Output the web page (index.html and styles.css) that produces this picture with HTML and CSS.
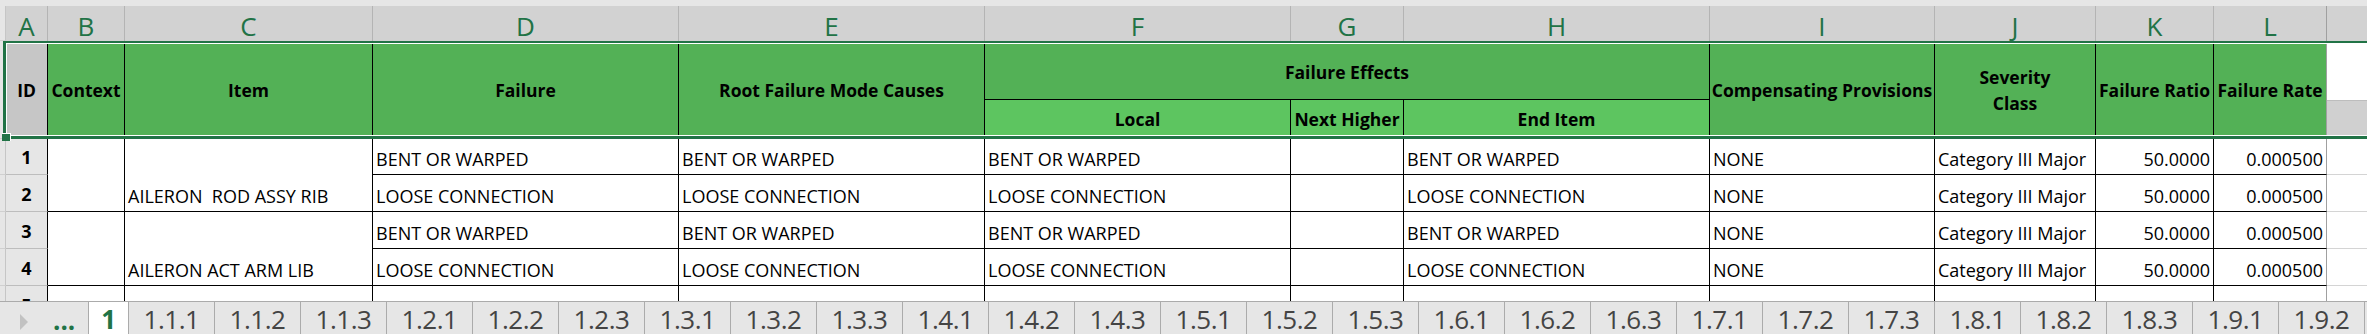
FILE: index.html
```html
<!DOCTYPE html>
<html lang="en">
<head>
<meta charset="utf-8">
<title>FMEA worksheet</title>
<link rel="stylesheet" href="styles.css">
</head>
<body>
<div class="app">
  <div class="topstrip"></div>
  <div class="sheet">
    <div class="grid">
      <!-- column letters -->
      <div class="gut col-gut"></div>
      <div class="colh">A</div>
      <div class="colh">B</div>
      <div class="colh">C</div>
      <div class="colh">D</div>
      <div class="colh">E</div>
      <div class="colh">F</div>
      <div class="colh">G</div>
      <div class="colh">H</div>
      <div class="colh">I</div>
      <div class="colh">J</div>
      <div class="colh">K</div>
      <div class="colh last">L</div>
      <div class="colh rest"></div>

      <!-- header rows -->
      <div class="gut span2"></div>
      <div class="idcell span2">ID</div>
      <div class="hd span2">Context</div>
      <div class="hd span2">Item</div>
      <div class="hd span2">Failure</div>
      <div class="hd span2">Root Failure Mode Causes</div>
      <div class="hd group">Failure Effects</div>
      <div class="hd span2">Compensating Provisions</div>
      <div class="hd span2">Severity<br>Class</div>
      <div class="hd span2">Failure Ratio</div>
      <div class="hd span2 last">Failure Rate</div>
      <div class="rest-top"></div>
      <div class="hd sub">Local</div>
      <div class="hd sub">Next Higher</div>
      <div class="hd sub">End Item</div>
      <div class="rest-bot"></div>

      <!-- row 1 -->
      <div class="gut"></div>
      <div class="rn">1</div>
      <div class="c span2"></div>
      <div class="c span2 pre">AILERON  ROD ASSY RIB</div>
      <div class="c">BENT OR WARPED</div>
      <div class="c">BENT OR WARPED</div>
      <div class="c">BENT OR WARPED</div>
      <div class="c"></div>
      <div class="c">BENT OR WARPED</div>
      <div class="c">NONE</div>
      <div class="c">Category III Major</div>
      <div class="c num">50.0000</div>
      <div class="c num last">0.000500</div>
      <div class="r"></div>
      <!-- row 2 -->
      <div class="gut"></div>
      <div class="rn">2</div>
      <div class="c">LOOSE CONNECTION</div>
      <div class="c">LOOSE CONNECTION</div>
      <div class="c">LOOSE CONNECTION</div>
      <div class="c"></div>
      <div class="c">LOOSE CONNECTION</div>
      <div class="c">NONE</div>
      <div class="c">Category III Major</div>
      <div class="c num">50.0000</div>
      <div class="c num last">0.000500</div>
      <div class="r"></div>
      <!-- row 3 -->
      <div class="gut"></div>
      <div class="rn">3</div>
      <div class="c span2"></div>
      <div class="c span2">AILERON ACT ARM LIB</div>
      <div class="c">BENT OR WARPED</div>
      <div class="c">BENT OR WARPED</div>
      <div class="c">BENT OR WARPED</div>
      <div class="c"></div>
      <div class="c">BENT OR WARPED</div>
      <div class="c">NONE</div>
      <div class="c">Category III Major</div>
      <div class="c num">50.0000</div>
      <div class="c num last">0.000500</div>
      <div class="r"></div>
      <!-- row 4 -->
      <div class="gut"></div>
      <div class="rn">4</div>
      <div class="c">LOOSE CONNECTION</div>
      <div class="c">LOOSE CONNECTION</div>
      <div class="c">LOOSE CONNECTION</div>
      <div class="c"></div>
      <div class="c">LOOSE CONNECTION</div>
      <div class="c">NONE</div>
      <div class="c">Category III Major</div>
      <div class="c num">50.0000</div>
      <div class="c num last">0.000500</div>
      <div class="r"></div>
      <!-- row 5 -->
      <div class="gut"></div>
      <div class="rn">5</div>
      <div class="c"></div>
      <div class="c"></div>
      <div class="c"></div>
      <div class="c"></div>
      <div class="c"></div>
      <div class="c"></div>
      <div class="c"></div>
      <div class="c"></div>
      <div class="c"></div>
      <div class="c"></div>
      <div class="c last"></div>
      <div class="r"></div>
    </div>
    <div class="selection"><span class="handle"></span></div>
  </div>

  <div class="tabbar">
    <div class="tabnav">
      <svg class="navarrow" width="10" height="18" viewBox="0 0 10 18"><polygon points="1,1 9,9 1,17" fill="#c2c2c2"/></svg>
      <span class="dots">...</span>
    </div>
    <div class="tab active">1</div>
    <div class="tab">1.1.1</div>
    <div class="tab">1.1.2</div>
    <div class="tab">1.1.3</div>
    <div class="tab">1.2.1</div>
    <div class="tab">1.2.2</div>
    <div class="tab">1.2.3</div>
    <div class="tab">1.3.1</div>
    <div class="tab">1.3.2</div>
    <div class="tab">1.3.3</div>
    <div class="tab">1.4.1</div>
    <div class="tab">1.4.2</div>
    <div class="tab">1.4.3</div>
    <div class="tab">1.5.1</div>
    <div class="tab">1.5.2</div>
    <div class="tab">1.5.3</div>
    <div class="tab">1.6.1</div>
    <div class="tab">1.6.2</div>
    <div class="tab">1.6.3</div>
    <div class="tab">1.7.1</div>
    <div class="tab">1.7.2</div>
    <div class="tab">1.7.3</div>
    <div class="tab">1.8.1</div>
    <div class="tab">1.8.2</div>
    <div class="tab">1.8.3</div>
    <div class="tab">1.9.1</div>
    <div class="tab">1.9.2</div>
  </div>
</div>
</body>
</html>
```

FILE: styles.css
```css
* { box-sizing: border-box; }
html, body {
  margin: 0;
  padding: 0;
  background: #ffffff;
}
body {
  width: 2367px;
  height: 334px;
  overflow: hidden;
  font-family: "Open Sans", "Noto Sans", "Liberation Sans", sans-serif;
  color: #000;
}
.app {
  display: flex;
  flex-direction: column;
  width: 2367px;
  height: 334px;
}
.topstrip {
  height: 6px;
  flex: 0 0 6px;
  background: #e6e6e6;
}
.sheet {
  position: relative;
  flex: 0 0 295px;
  height: 295px;
  overflow: hidden;
}
.grid {
  display: grid;
  grid-template-columns: 6px 42px 77px 248px 306px 306px 306px 113px 306px 225px 161px 118px 113px 40px;
  grid-template-rows: 35px 59px 39px 36px 37px 37px 37px 37px;
}
.span2 { grid-row: span 2; }

/* gutter */
.gut {
  background: #e6e6e6;
  border-right: 1px solid #c6c6c6;
  border-bottom: 1px solid #d0d0d0;
}
.col-gut { background: #e6e6e6; }

/* column letters */
.colh {
  background: #d2d2d2;
  border-right: 1px solid #b4b4b4;
  color: #217346;
  font-size: 26px;
  font-weight: 400;
  display: flex;
  align-items: center;
  justify-content: center;
  padding-top: 5px;
  line-height: 30px;
}
.colh.last { border-right-color: #a0a0a0; }
.colh.rest { border-right: none; }

/* header block */
.idcell {
  background: #c6c6c6;
  border-right: 1px solid #000;
  font-weight: 700;
  font-size: 17.5px;
  display: flex;
  align-items: center;
  justify-content: center;
}
.hd {
  background: #53b156;
  border-right: 1px solid #000;
  font-weight: 700;
  font-size: 17.5px;
  line-height: 26px;
  display: flex;
  align-items: center;
  justify-content: center;
  text-align: center;
  white-space: nowrap;
  overflow: hidden;
}
.hd.last { border-right-color: #a0a0a0; }
.hd.group {
  grid-column: span 3;
  border-bottom: 1px solid #000;
  padding-top: 3px;
}
.hd.sub {
  background: #5dc560;
  padding-bottom: 1px;
}
.rest-top { background: #ffffff; }
.rest-bot {
  background: #d0d0d0;
  border-top: 1px solid #bdbdbd;
}

/* data rows */
.rn {
  background: #e6e6e6;
  border-right: 1px solid #000;
  border-bottom: 1px solid #bdbdbd;
  font-weight: 700;
  font-size: 18px;
  display: flex;
  align-items: center;
  justify-content: center;
  padding-top: 1px;
}
.c {
  border-right: 1px solid #000;
  border-bottom: 1px solid #000;
  font-size: 18px;
  line-height: 24px;
  display: flex;
  align-items: flex-end;
  padding: 0 3px 3px 3px;
  white-space: nowrap;
  overflow: hidden;
}
.c.pre { white-space: pre; }
.c.num { justify-content: flex-end; }
.c.last { border-right-color: #a0a0a0; }
.r {
  border-bottom: 1px solid #d4d4d4;
}

/* selection frame overlay */
.selection {
  position: absolute;
  left: 3px;
  top: 35px;
  right: -20px;
  height: 98px;
  border-top: 2px solid #217346;
  border-left: 3px solid #217346;
  border-bottom: 3px solid #217346;
  box-shadow: inset 1px 1px 0 0 #ffffff, inset 0 -1px 0 0 #ffffff;
  pointer-events: none;
}
.handle {
  position: absolute;
  left: -4px;
  bottom: -5px;
  width: 9px;
  height: 8px;
  background: #217346;
  border: 1px solid #ffffff;
  border-left: none;
  border-bottom: none;
}

/* sheet tabs */
.tabbar {
  flex: 0 0 33px;
  height: 33px;
  display: flex;
  background: #e6e6e6;
  border-top: 1px solid #ababab;
  overflow: hidden;
}
.tabnav {
  flex: 0 0 89px;
  display: flex;
  align-items: flex-start;
  border-right: 1px solid #ababab;
}
.navarrow {
  margin: 11px 0 0 19px;
}
.dots {
  margin-left: 24px;
  color: #217346;
  font-weight: 700;
  font-size: 26px;
  line-height: 28px;
  padding-top: 4px;
}
.tab {
  flex: 0 0 86px;
  border-right: 1px solid #ababab;
  color: #444444;
  font-size: 26px;
  line-height: 28px;
  padding-top: 3px;
  text-align: center;
  letter-spacing: -0.5px;
}
.tab.active {
  flex: 0 0 40px;
  background: #ffffff;
  color: #217346;
  font-weight: 700;
  margin-top: -1px;
  padding-top: 4px;
}
```
